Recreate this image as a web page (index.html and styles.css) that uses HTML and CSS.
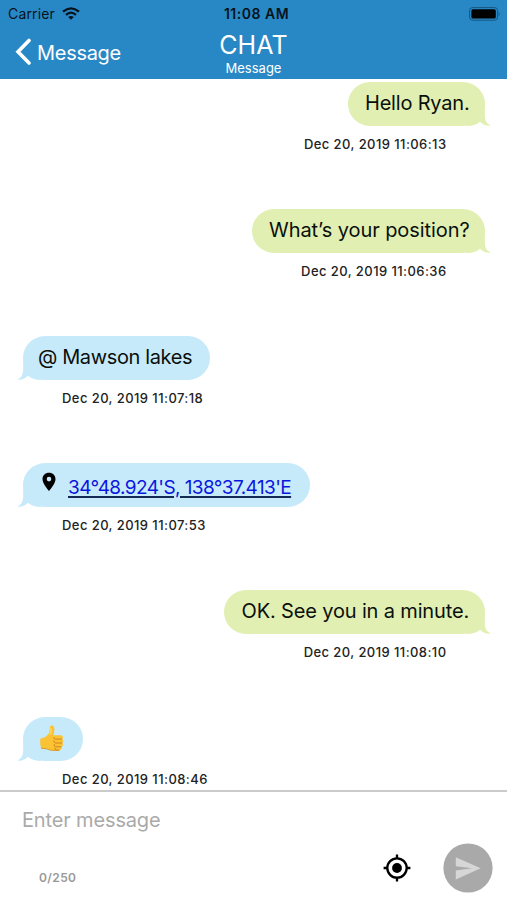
FILE: index.html
```html
<!DOCTYPE html>
<html lang="en">
<head>
<meta charset="utf-8">
<title>Chat</title>
<link rel="stylesheet" href="styles.css">
</head>
<body>
<svg width="0" height="0" class="defs">
  <symbol id="tail" viewBox="0 0 24 28"><path d="M17.8 0V11C17.8 17 19 20.8 24 22.3C21 23.6 16.5 22.2 13 18.8C9.5 21.8 5 23 0 23V0Z"/></symbol>
</svg>
<div class="screen">
  <header class="header">
    <div class="status">
      <div class="carrier"><span class="carrier-name">Carrier</span>
        <svg class="wifi" width="18" height="13" viewBox="0 0 18 13"><g fill="none" stroke="#07131c" stroke-width="2.3"><path d="M1 4.7Q9-2 17 4.7"/><path d="M4 7.8Q9 3.4 14 7.8"/></g><path d="M6.2 10Q9 7.8 11.8 10L9 12.8Z" fill="#07131c"/></svg>
      </div>
      <span class="clock">11:08 AM</span>
      <svg class="battery" width="32" height="14" viewBox="0 0 32 14"><rect x=".6" y=".6" width="28" height="12.6" rx="3" fill="none" stroke="#17557f"/><rect x="2.4" y="2.2" width="24.4" height="9.4" rx="1.6"/><path d="M29.7 4.6q2 2.4 0 4.8z" fill="#17557f"/></svg>
    </div>
    <div class="nav">
      <div class="back">
        <svg width="17" height="28" viewBox="0 0 17 28"><path d="M14 2.5L3 13.8L14 25" fill="none" stroke="#fff" stroke-width="3.6" stroke-linecap="round" stroke-linejoin="miter"/></svg>
        <span class="back-label">Message</span>
      </div>
      <div class="titles"><h1 class="title">CHAT</h1><span class="subtitle">Message</span></div>
    </div>
  </header>
  <main class="messages">
    <section class="row sent"><div class="bubble b1"><span class="text t1">Hello Ryan.</span><svg class="tail"><use href="#tail"/></svg></div><time>Dec 20, 2019 11:06:13</time></section>
    <section class="row sent"><div class="bubble b2"><span class="text t2">What’s your position?</span><svg class="tail"><use href="#tail"/></svg></div><time>Dec 20, 2019 11:06:36</time></section>
    <section class="row received"><div class="bubble b3"><span class="text t3">@ Mawson lakes</span><svg class="tail"><use href="#tail"/></svg></div><time>Dec 20, 2019 11:07:18</time></section>
    <section class="row received"><div class="bubble b4"><svg class="pin" width="14" height="20" viewBox="0 0 14 20"><path fill-rule="evenodd" d="M7 .8C3.2.8.5 3.5.5 7.2C.5 11.8 7 19 7 19S13.5 11.8 13.5 7.2C13.5 3.5 10.8.8 7 .8ZM7 4.8a2.3 2.3 0 1 1 0 4.6a2.3 2.3 0 0 1 0-4.6Z"/></svg><a class="text link">34°48.924'S, 138°37.413'E</a><svg class="tail"><use href="#tail"/></svg></div><time>Dec 20, 2019 11:07:53</time></section>
    <section class="row sent"><div class="bubble b5"><span class="text t5">OK. See you in a minute.</span><svg class="tail"><use href="#tail"/></svg></div><time>Dec 20, 2019 11:08:10</time></section>
    <section class="row received"><div class="bubble b6">
      <svg class="thumb" width="24" height="26" viewBox="0 0 24 26">
        <path d="M.4 13.4C3.7 13.4 6 12 8 9.6C9.7 7.5 9.5 4.6 10 2C10.4.1 12.7 0 13.7 1.4C15.2 3.8 14 7.2 13.5 10.2L20.4 10.2C23.2 10.3 23.7 13.2 22 14.1C24 15.2 23.6 17.3 22.2 18C23.6 19.3 23 21.3 21.4 21.8C22 23.6 21 25.2 18.8 25.3C13 25.8 9.5 25.5 6.7 23.8L1.1 23.3Q-.3 18.5.4 13.4Z" fill="#fbc233"/>
        <path d="M22 14.1H15.5Q13.5 14 13.8 12.2M22.2 18H15.5Q13.8 17.8 14 15.5M21.4 21.8H15.8Q14 21.6 14.2 19.2M19.5 25Q15 25.8 14.8 22.8" fill="none" stroke="#d0851a" stroke-width="1"/>
        <path d="M1.1 23.3L6.7 23.8C10 25.7 14 25.6 18.8 25.3" fill="none" stroke="#d9951f" stroke-width=".9"/>
        <path d="M11 3.2Q11.6 7 9.5 10.2" fill="none" stroke="#ffd85a" stroke-width="1.6"/>
      </svg><svg class="tail"><use href="#tail"/></svg></div><time>Dec 20, 2019 11:08:46</time></section>
  </main>
  <footer class="composer">
    <div class="placeholder">Enter message</div>
    <div class="tools">
      <span class="count">0/250</span>
      <svg class="locate" width="28" height="28" viewBox="0 0 28 28"><circle cx="14" cy="14" r="9.7" fill="none" stroke="#000" stroke-width="2.3"/><circle cx="14" cy="14" r="4.9"/><path d="M14 .6V5M14 23V27.4M.6 14H5M23 14H27.4" stroke="#000" stroke-width="2.3"/></svg>
      <svg class="send" width="50" height="50" viewBox="0 0 50 50"><circle cx="25" cy="25" r="24.6" fill="#a9a9a9"/><path d="M12.8 14.2L37.7 25.3L12.8 36.4V27.4L29 25.3L12.8 23.2Z" fill="#d6d6d6"/></svg>
    </div>
  </footer>
</div>
</body>
</html>
```
FILE: styles.css
```css
* { box-sizing: border-box; }
body { margin: 0; background: #fff; font-family: Inter, "Liberation Sans", sans-serif; color: #0b0f0c; }
.defs { display: block; }
.screen { width: 507px; height: 900px; display: flex; flex-direction: column; overflow: hidden; }
.header { height: 79px; flex: none; background: #2888c5; }
.status { height: 27px; display: grid; grid-template-columns: 1fr auto 1fr; align-items: center; padding: 0 6px 0 8px; color: #07131c; }
.carrier { display: flex; align-items: center; gap: 7px; }
.carrier-name { font-size: 14px; letter-spacing: .15px; }
.clock { font-size: 14px; font-weight: 600; letter-spacing: .5px; margin-left: 4px; }
.battery { justify-self: end; }
.nav { display: grid; grid-template-columns: 1fr auto 1fr; color: #fff; height: 52px; }
.back { display: flex; align-items: center; gap: 5px; padding-left: 15px; height: 50px; }
.back-label { font-size: 20px; letter-spacing: -.3px; line-height: 24px; margin-top: 2px; }
.titles { text-align: center; }
.title { margin: 3px 0 0; font-size: 25px; font-weight: 400; line-height: 30px; letter-spacing: .1px; }
.subtitle { display: block; font-size: 13px; line-height: 16px; margin-top: 0; }
.messages { height: 711px; flex: none; padding-top: 3px; overflow: hidden; }
.row { height: 127px; display: flex; flex-direction: column; align-items: flex-start; padding: 0 22px 0 23px; }
.sent { align-items: flex-end; }
.bubble { position: relative; height: 43.5px; flex: none; display: flex; align-items: center; border-radius: 22px; white-space: nowrap; }
.sent .bubble { background: #e1efb2; padding-left: 17px; fill: #e1efb2; }
.received .bubble { background: #c7eafa; padding-left: 15px; fill: #c7eafa; }
.text { position: relative; z-index: 1; font-size: 20px; line-height: 26px; margin-top: -2px; }
.t1 { letter-spacing: -.2px; }
.t2 { letter-spacing: -.07px; }
.t3 { letter-spacing: -.38px; }
.t5 { letter-spacing: -.15px; margin-left: .5px; }
.tail { position: absolute; width: 24px; height: 28px; right: -6px; bottom: -5px; }
.received .tail { right: auto; left: -6px; transform: scaleX(-1); }
.b1 { width: 137px; }
.b2 { width: 233px; }
.b3 { width: 187px; }
.b4 { width: 287px; }
.b5 { width: 261px; }
.b6 { width: 60px; }
.b4 .pin, .thumb { position: relative; z-index: 1; }
.b4 .pin { fill: #000; margin: -5px 12px 0 4px; }
.link { color: #0a16e0; text-decoration: underline; text-decoration-color: #142a55; text-decoration-thickness: 1.5px; text-underline-offset: 2px; font-size: 19px; letter-spacing: -.6px; margin-top: 6px; }
.thumb { margin: -2px 0 0 2px; }
time { font-size: 13px; line-height: 16px; margin-top: 10px; color: #222; white-space: nowrap; font-weight: 450; letter-spacing: .43px; }
.sent time { margin-right: 38.5px; }
.received time { margin-left: 39px; }
.composer { flex: none; height: 110px; border-top: 2px solid #cbcbcb; }
.placeholder { padding: 15px 0 0 22px; font-size: 20px; line-height: 26px; letter-spacing: -.15px; color: #aaa; }
.tools { display: flex; align-items: center; height: 50px; margin-top: 10px; padding: 0 14px 0 39px; }
.count { font-size: 12px; font-weight: 600; color: #999; letter-spacing: .4px; margin-top: 18px; }
.locate { margin-left: auto; margin-right: 32px; }
```
